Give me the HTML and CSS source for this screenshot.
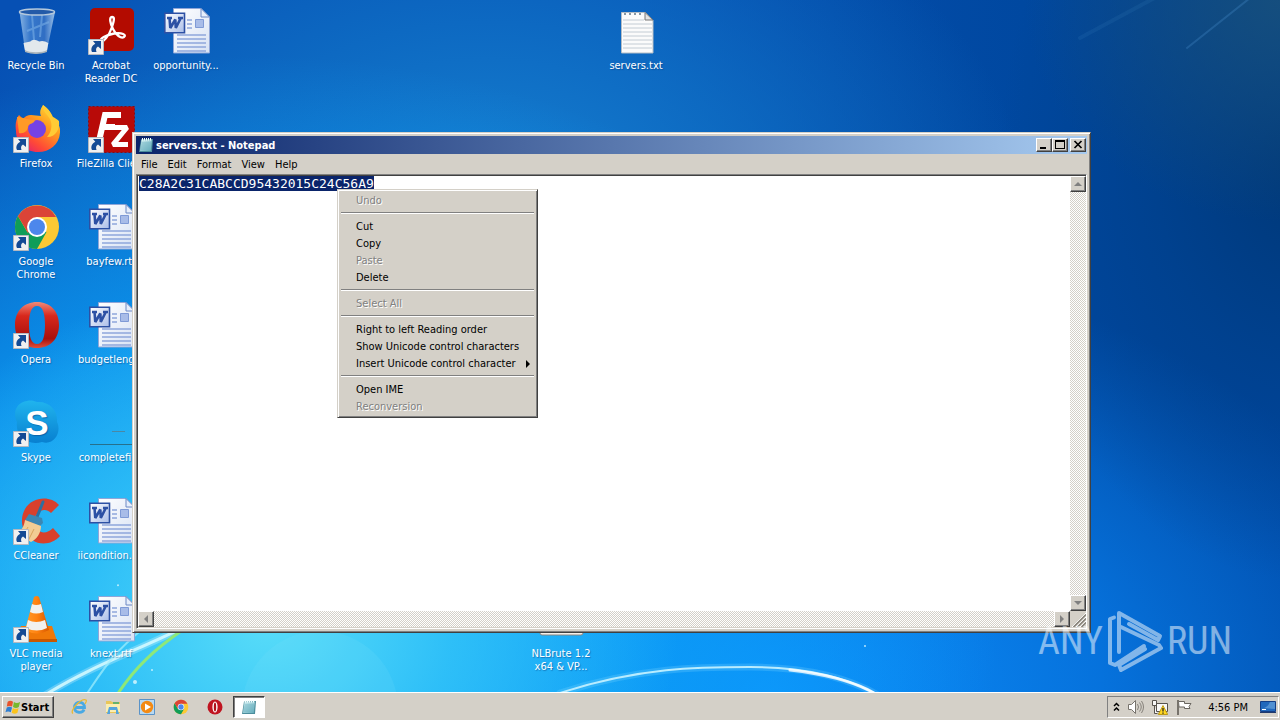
FILE: index.html
```html
<!DOCTYPE html>
<html lang="en">
<head>
<meta charset="utf-8">
<title>Desktop</title>
<link rel="stylesheet" href="styles.css">
</head>
<body>
<svg class="defs" aria-hidden="true">
  <defs>
    <linearGradient id="gGlass" x1="0" x2="1"><stop offset="0" stop-color="#9cc3ea"/><stop offset=".3" stop-color="#3f7fd0"/><stop offset=".7" stop-color="#3873c6"/><stop offset="1" stop-color="#b4d3f0"/></linearGradient>
    <linearGradient id="gPage" x1="0" y1="0" x2="1" y2="1"><stop offset="0" stop-color="#ffffff"/><stop offset="1" stop-color="#d8e2f4"/></linearGradient>
    <linearGradient id="gW" x1="0" y1="0" x2="1" y2="1"><stop offset="0" stop-color="#ffffff"/><stop offset="1" stop-color="#a9bde8"/></linearGradient>
    <linearGradient id="gFox" x1=".9" y1="0" x2=".2" y2="1"><stop offset="0" stop-color="#ffe83c"/><stop offset=".4" stop-color="#ff9a1f"/><stop offset=".75" stop-color="#ff4a36"/><stop offset="1" stop-color="#e3206e"/></linearGradient>
    <linearGradient id="gOpera" x1="0" y1="0" x2="0" y2="1"><stop offset="0" stop-color="#f08a78"/><stop offset=".3" stop-color="#d8281c"/><stop offset=".8" stop-color="#a8100c"/><stop offset="1" stop-color="#e0503c"/></linearGradient>
    <linearGradient id="gSkype" x1="0" y1="0" x2="0" y2="1"><stop offset="0" stop-color="#20b4ee"/><stop offset="1" stop-color="#0880d0"/></linearGradient>
    <linearGradient id="gNote" x1="0" y1="0" x2="1" y2="1"><stop offset="0" stop-color="#d4f0f2"/><stop offset="1" stop-color="#5fa9b8"/></linearGradient>
    <linearGradient id="gCone" x1="0" x2="1"><stop offset="0" stop-color="#ff9a28"/><stop offset=".5" stop-color="#ff8210"/><stop offset="1" stop-color="#d85800"/></linearGradient>
    <symbol id="shortcut" viewBox="0 0 16 16"><path fill="#f0f0f0" stroke="#b4b8c0" d="M.5.5h15v15H.5z"/><path fill="#144a94" d="M5 2h8v8l-3-2.600c-2 1.300-2.400 3-1.500 5.600H4C2.400 9.600 4 6.500 7.300 4.700z"/></symbol>
    <symbol id="word" viewBox="0 0 48 48">
      <path fill="url(#gPage)" stroke="#8fa6d8" d="M11.500 1.500h27.500l8.500 8.500v36h-36z"/>
      <path fill="#e6eefb" stroke="#6c88c4" d="M39 1.500v8.500h8.500z"/>
      <path fill="none" stroke="#8ea6dc" stroke-width="1.300" d="M25 13h5M25 17h5M25 21h5M15 28h29M15 32h29M15 36h29M15 40h29M15 44h29"/>
      <path fill="#a8bce8" stroke="#7f9ad6" d="M33.500 12.500h8v8h-8z"/>
      <path fill="url(#gW)" stroke="#2c50a4" stroke-width="1.600" d="M2.800 6.300h19.700v19.400H2.800z"/>
      <path fill="none" stroke="#2c50a4" stroke-width="2.600" stroke-linejoin="bevel" d="M5 11h5M7.500 11l.8 10 5-8.500.5 8.500 5-10M16 11h5"/>
    </symbol>
    <symbol id="chrome" viewBox="0 0 48 48">
      <circle cx="24" cy="24" r="22" fill="#fcc934"/>
      <path fill="#0f9d58" d="M4.950 13A22 22 0 0 0 24 46l9.500-17L24 24 14.500 29.500z"/>
      <path fill="#db4437" d="M4.950 13 15 30l9-16h19.050A22 22 0 0 0 4.950 13z"/>
      <circle cx="24" cy="24" r="10" fill="#fff"/><circle cx="24" cy="24" r="8" fill="#4c87ec"/>
    </symbol>
    <symbol id="notepad" viewBox="0 0 16 16">
      <path fill="#4b8d9c" d="M3 2.500 15 2l-1 13H1z"/><path fill="url(#gNote)" d="M3.500 2.500H14l-1.200 11.500H2z"/>
      <path stroke="#6fb4c4" stroke-width=".8" d="M3.500 6h9.500M3.200 8h9.500M3 10h9.500M2.800 12h9.500"/>
      <path stroke="#f4ffff" stroke-width="1" d="M4.500 1v2.500M6.500 1v2.500M8.500 1v2.500M10.500 1v2.500M12.500 1v2.500"/>
    </symbol>
  </defs>
</svg>

<main class="desktop">
  <svg class="wallpaper" viewBox="0 0 1280 693" preserveAspectRatio="none" aria-hidden="true">
    <g fill="none" stroke-linecap="round">
      <path stroke="#fff" stroke-width="7" opacity=".25" d="M45 696C90 668 135 652 180 630"/>
      <path stroke="#d8fbff" stroke-width="3" opacity=".85" d="M45 696C90 668 135 652 180 630"/>
      <path stroke="#a4f0fc" stroke-width="2" opacity=".7" d="M86 696C105 668 112 655 145 628"/>
      <path stroke="#8ee878" stroke-width="3" d="M117 696C135 668 155 650 184 630"/>
      <path stroke="#7fd8ff" stroke-width="7" opacity=".25" d="M560 694C640 668 700 668 750 668C800 668 845 677 878 696"/>
      <path stroke="#b8ecff" stroke-width="2" d="M560 694C640 668 700 668 750 668C800 668 845 677 878 696"/>
      <path stroke="#fff" stroke-width="3" opacity=".8" d="M790 671C825 675 853 682 874 694"/>
      <path stroke="#4a90cc" stroke-width="2" opacity=".3" d="M1187 48 1250 -2"/>
      <path stroke="#4a90cc" stroke-width="4" opacity=".12" d="M1080 38 1160 -5"/>
    </g>
    <circle cx="320" cy="710" r="78" fill="#8fe4ff" opacity=".12"/>
    <g fill="#dffaff" opacity=".8"><circle cx="118" cy="586" r="1"/><circle cx="135" cy="683" r="2"/><circle cx="152" cy="671" r="1"/><circle cx="865" cy="647" r="1"/></g>
  </svg>

  <div class="icons">
    <button class="icon"><svg viewBox="0 0 48 48"><path fill="url(#gGlass)" opacity=".85" d="M7.500 5 13 43c1 4 21 4 22 0L43 5z"/><path fill="#e2e8ec" d="m11.500 36 1.500 8c2 3 20 3 22 0l1.300-8q-5-3-9-1.500-6-3.500-9 0z"/><path fill="#aab4ba" d="M13 43c4 3 18 3 22 0v2q-11 4-22 0z"/><path fill="none" stroke="#78aee4" stroke-width="2" opacity=".6" d="m20 8 2 25M30 8l-2 22M15 24l22-9"/><ellipse cx="25" cy="5" rx="17.500" ry="3" fill="#235aa8" stroke="#b4c8dc" stroke-width="1.500"/></svg><span>Recycle Bin</span></button>
    <button class="icon"><svg viewBox="0 0 48 48"><rect x="3" y="1" width="44" height="43" rx="5" fill="#b30b00"/><path fill="none" stroke="#fff" stroke-width="2.300" d="M25 10c-3 0-2 6 1 12s8 10 11 8-2-5-10-3.500S12 32 14 34s8-5 11-14 2-10 0-10z"/><use href="#shortcut" x="1" y="32" width="16" height="16"/></svg><span>Acrobat Reader DC</span></button>
    <button class="icon"><svg viewBox="0 0 48 48"><use href="#word"/></svg><span>opportunity...</span></button>
    <button class="icon far-top"><svg viewBox="0 0 48 48"><path fill="#fbfbfb" stroke="#b4bcc4" d="M9.500 5.500h24l7.500 7.500v33H9.500z"/><path stroke="#c3ccd4" d="M11 13h21M11 17h29M11 21h29M11 25h29M11 29h29M11 33h29M11 37h29M11 41h29"/><path fill="#e4e4e4" stroke="#777" d="M33 5.500V13h8z"/><path stroke="#8898a4" stroke-width="2" stroke-dasharray="2 3" d="M12 7h20"/></svg><span>servers.txt</span></button>

    <button class="icon c1 r2"><svg viewBox="0 0 48 48"><path fill="url(#gFox)" d="M4 26C3 19 4 14 7 10l4 4q3-4 8-4l10 1C27 7 29 3 31 0c6 4 8 8 9 12 3 1 7 6 8 12 1 14-9 23-22 23S4 38 4 26z"/><circle cx="25" cy="24" r="9" fill="#7542e5"/><path fill="#ff9a26" d="M5 12c6 0 10 3 18 3-1 4-5 3-7 6 0 5-4 8-9 7z"/><path fill="#ffcb35" d="M31 0c-1 6 4 9 7 14 3 6 1 14-3 18 9 0 13-8 12-16-2-2-4-3-6-4C39 7 35 3 31 0z"/><use href="#shortcut" x="1" y="32" width="16" height="16"/></svg><span>Firefox</span></button>
    <button class="icon c2 r2"><svg viewBox="0 0 48 48"><path fill="#b80a08" stroke="#8c0b12" stroke-dasharray="2 2" d="M1.500 1.500h46v46h-46z"/><path fill="none" stroke="#fff" stroke-width="6" d="M34 10H18l-6 26M15 22h13"/><path fill="none" stroke="#fff" stroke-width="5" stroke-linejoin="bevel" d="M26 22.500h14L26 39.500h15"/><use href="#shortcut" x="1" y="32" width="16" height="16"/></svg><span>FileZilla Clie...</span></button>

    <button class="icon c1 r3"><svg viewBox="0 0 48 48"><use href="#chrome" x="1"/><use href="#shortcut" x="1" y="32" width="16" height="16"/></svg><span>Google Chrome</span></button>
    <button class="icon c2 r3"><svg viewBox="0 0 48 48"><use href="#word"/></svg><span>bayfew.rtf</span></button>

    <button class="icon c1 r4"><svg viewBox="0 0 48 48"><path fill="url(#gOpera)" fill-rule="evenodd" d="M25 1c13 0 22 9 22 23S38 47 25 47 3 38 3 24 12 1 25 1zm0 4c-6 0-8 8-8 19s2 19 8 19 8-8 8-19-2-19-8-19z"/><use href="#shortcut" x="1" y="32" width="16" height="16"/></svg><span>Opera</span></button>
    <button class="icon c2 r4"><svg viewBox="0 0 48 48"><use href="#word"/></svg><span>budgetleng...</span></button>

    <button class="icon c1 r5"><svg viewBox="0 0 48 48"><path fill="url(#gSkype)" d="M15 2c4-1 7 0 10 1 12-1 21 8 20 20 5 10-3 24-15 20C15 47 3 37 5 23 0 13 5 3 15 2z"/><text x="25" y="36" text-anchor="middle" class="glyph-s">S</text><use href="#shortcut" x="1" y="32" width="16" height="16"/></svg><span>Skype</span></button>
    <button class="icon c2 r5"><svg viewBox="0 0 48 48"><path stroke="#26708c" d="M3 45.500h44"/><path stroke="#4a88a4" d="M25 32.500h13"/></svg><span>completefil...</span></button>

    <button class="icon c1 r6"><svg viewBox="0 0 48 48"><path fill="#d8402c" d="M47 8c-9-10-27-8-34 4-6 11-3 24 7 31 9 6 21 4 28-4l-7-8c-5 5-11 6-15 2-5-5-5-12-1-16 4-5 10-5 14-1z"/><path stroke="#2d6f9f" stroke-width="3" stroke-linecap="round" d="M31 5 25 20"/><path fill="#3a87b4" d="m17 17 13 4 1 5-3 3-15-6z"/><path fill="#f2cd94" d="m13 23 16 6c0 7-4 13-10 16L4 36c5-2 8-6 9-13z"/><path fill="none" stroke="#d9a45c" d="m16 30-6 10M22 32l-6 12"/><use href="#shortcut" x="1" y="32" width="16" height="16"/></svg><span>CCleaner</span></button>
    <button class="icon c2 r6"><svg viewBox="0 0 48 48"><use href="#word"/></svg><span>iicondition.r...</span></button>

    <button class="icon c1 r7"><svg viewBox="0 0 48 48"><path fill="#f07808" d="m9 31-6 15h42l-5-15z"/><path fill="#c85800" d="M3 44h42v3H3z"/><path fill="url(#gCone)" d="M22 2q3-2 5 0l10 33q-12 7-24 0z"/><path fill="#f1f1ee" d="m20 9-2 8q6 3 13 0l-2-8q-5 2-9 0zm-4 16-2 8q11 5 21 0l-2-8q-9 4-17 0z"/><use href="#shortcut" x="1" y="32" width="16" height="16"/></svg><span>VLC media player</span></button>
    <button class="icon c2 r7"><svg viewBox="0 0 48 48"><use href="#word"/></svg><span>knext.rtf</span></button>
    <button class="icon far-bottom"><svg viewBox="0 0 48 48"><rect x="3" y="4" width="43" height="36" rx="2" fill="#f4f0ea" stroke="#8a8580"/></svg><span>NLBrute 1.2 x64 &amp; VP...</span></button>
  </div>

  <section class="window">
    <header class="titlebar">
      <svg class="small-icon" viewBox="0 0 16 16"><use href="#notepad"/></svg>
      <h1>servers.txt - Notepad</h1>
      <div class="controls">
        <button class="bevel" aria-label="Minimize"><svg viewBox="0 0 12 10"><path d="M2 7h6v2H2z"/></svg></button>
        <button class="bevel" aria-label="Maximize"><svg viewBox="0 0 12 10"><path fill-rule="evenodd" d="M1 0h10v9H1zm1 2v6h8V2z"/></svg></button>
        <button class="bevel close" aria-label="Close"><svg viewBox="0 0 12 10"><path fill="none" stroke="#000" stroke-width="1.700" d="m2.500 1 7 7m0-7-7 7"/></svg></button>
      </div>
    </header>
    <nav class="menubar">
      <button>File</button><button>Edit</button><button>Format</button><button>View</button><button>Help</button>
    </nav>
    <div class="editor">
      <textarea id="text" aria-label="Document text" spellcheck="false">C28A2C31CABCCD95432015C24C56A9</textarea>
      <div class="scroll vertical">
        <button class="bevel" aria-label="Scroll up"><svg viewBox="0 0 12 12"><path d="M6 4 2 8h8z"/></svg></button>
        <button class="bevel" aria-label="Scroll down"><svg viewBox="0 0 12 12"><path d="M6 8 2 4h8z"/></svg></button>
      </div>
      <div class="scroll">
        <button class="bevel" aria-label="Scroll left"><svg viewBox="0 0 12 12"><path d="M4 6l4-4v8z"/></svg></button>
        <button class="bevel" aria-label="Scroll right"><svg viewBox="0 0 12 12"><path d="M8 6 4 2v8z"/></svg></button>
      </div>
      <svg class="grip" viewBox="0 0 16 16"><path stroke="#fff" d="M2 16 16 2M6 16 16 6M10 16l6-6"/><path stroke="#848078" stroke-width="1.500" d="M3.500 16 16 3.500M7.500 16 16 7.500M11.500 16l4.500-4.500"/></svg>
    </div>
  </section>

  <div class="context" role="menu">
    <button role="menuitem" disabled>Undo</button>
    <hr>
    <button role="menuitem">Cut</button>
    <button role="menuitem">Copy</button>
    <button role="menuitem" disabled>Paste</button>
    <button role="menuitem">Delete</button>
    <hr>
    <button role="menuitem" disabled>Select All</button>
    <hr>
    <button role="menuitem">Right to left Reading order</button>
    <button role="menuitem">Show Unicode control characters</button>
    <button role="menuitem">Insert Unicode control character<svg viewBox="0 0 4 8"><path d="m0 0 4 4-4 4z"/></svg></button>
    <hr>
    <button role="menuitem">Open IME</button>
    <button role="menuitem" disabled>Reconversion</button>
  </div>

  <div class="watermark"><span>ANY</span><svg viewBox="0 0 56 64"><g fill="none" stroke="#fff" stroke-width="4" stroke-linejoin="round" stroke-linecap="round"><path d="M7 8.500 3 10v44l5 2 29-19"/><path d="M12 43V4l41 23-2 4-29-16"/><path d="m14 18 38 18 2 3-40 22-2-5 26-16"/></g></svg><span>RUN</span></div>
</main>

<footer class="taskbar">
  <button class="bevel start"><svg viewBox="0 0 18 16"><path fill="#e8532c" d="M3 2q3-2 6 0L8 7.500Q5 6 2 7.500z"/><path fill="#77b82c" d="M10 2.500q3 2 7 0L15.500 8q-3 2-6.500 0z"/><path fill="#2f7fd2" d="M2 8.500q3-1.500 6 0L6.500 14q-3-2-6 0z"/><path fill="#fbc31c" d="M8.800 9q3 2 6.500 0L14 14.500q-3 2-6.500 0z"/></svg>Start</button>
  <div class="launch">
    <button aria-label="Internet Explorer"><svg viewBox="0 0 16 16"><path fill="none" stroke="#49a9e4" stroke-width="2.800" d="M4 8.500h9.500c0-7-10-7-10 0 0 6 8 6 9.500 2"/><path fill="none" stroke="#e8b934" stroke-width="1.300" d="M2 14.500C-2 12 10-1 15 1q1 1-1 4"/></svg></button>
    <button aria-label="Explorer"><svg viewBox="0 0 16 16"><path fill="#e9c658" d="M1 2h5l1 1h8v11H1z"/><path fill="#fbeeb0" d="M1 5h14v8H1z"/><path fill="#55a5dc" d="M4 8h8l2 7h-3v-4H5v4H2z"/><path fill="#65b26c" d="M8 3h6v2H8z"/></svg></button>
    <button aria-label="Media Player"><svg viewBox="0 0 16 16"><path fill="#b8d9f2" stroke="#5a93c8" d="M.5.500h15v15H.5z"/><circle cx="8" cy="8" r="6.200" fill="#f38a14"/><path fill="#fff" d="m6 4.500 6 3.500-6 3.500z"/></svg></button>
    <button aria-label="Chrome"><svg viewBox="0 0 48 48"><use href="#chrome"/></svg></button>
    <button aria-label="Opera"><svg viewBox="0 0 16 16"><circle cx="8" cy="8" r="7.500" fill="#c01420"/><ellipse cx="8" cy="8" rx="2.600" ry="5.500" fill="#fff"/><ellipse cx="8" cy="8" rx="1.200" ry="4.500" fill="#b01018"/></svg></button>
  </div>
  <button class="task" aria-label="servers.txt - Notepad"><svg viewBox="0 0 16 16"><use href="#notepad"/></svg></button>
  <div class="tray">
    <button aria-label="Show hidden icons"><svg class="chev" viewBox="0 0 7 10"><path fill="none" stroke="#000" stroke-width="1.500" d="M1 4l2.500-2.500L6 4M1 8.500 3.500 6 6 8.500"/></svg></button>
    <button aria-label="Volume"><svg viewBox="0 0 16 16"><path fill="#fff" stroke="#77736c" d="M.5 5.500h3l4-4v13l-4-4h-3z"/><path fill="none" stroke="#85817a" d="M9.500 5q2 3 0 6M11.500 3.500q3.500 4.500 0 9M13.500 2q4 6 0 12"/></svg></button>
    <button aria-label="Network"><svg viewBox="0 0 16 16"><path fill="#f8f8f8" stroke="#57534e" d="M4.500 4.500h11v8h-11zM.5 1.500h4v5h-4zM2.500 6.500v8h3"/><path fill="#ffd722" stroke="#b08b00" stroke-width=".8" d="m11 6.500 4.700 9H6.300z"/><path stroke="#222" stroke-width="1.300" d="M11 9v3.500m0 1v1.200"/></svg></button>
    <button aria-label="Action Center"><svg viewBox="0 0 16 16"><path fill="#fff" stroke="#6a6660" d="M2.500 2.500h6v2h6.500l-2 3 1 2H8.500v-1.500h-5.500z"/><path stroke="#77736c" stroke-width="2" d="M2 1v15"/></svg></button>
    <time>4:56 PM</time>
    <button aria-label="Show desktop"><svg viewBox="0 0 16 16"><path fill="#2168bc" stroke="#143e86" d="M.5 2.500h15v10H.5z"/><path fill="#82b8e8" d="M1 9q6 1 9-6h5v7z" opacity=".5"/><path fill="#fff" d="M2 10h4v1H2z"/><path fill="#20396c" d="M0 13h16v1H0z"/></svg></button>
  </div>
</footer>
<script src="script.js"></script>
</body>
</html>
```
FILE: styles.css
```css
* { box-sizing: border-box; }

body {
  margin: 0;
  height: 100vh;
  display: flex;
  flex-direction: column;
  overflow: hidden;
  font: 11px/13px Tahoma, "DejaVu Sans Condensed", "DejaVu Sans", sans-serif;
  color: #000;
}

button {
  margin: 0;
  padding: 0;
  border: 0;
  background: none;
  font: inherit;
  color: inherit;
}

svg { display: block; }
.defs { position: absolute; width: 0; height: 0; }

/* Desktop */
.desktop {
  position: relative;
  flex: 1;
  min-height: 0;
  overflow: hidden;
  background:
    radial-gradient(ellipse 20% 32% at 100% 0%, #18507ce0 0%, #124c8000 100%),
    radial-gradient(ellipse 24% 60% at 102% 24%, #003878 0%, #003c8090 50%, #00489800 100%),
    radial-gradient(ellipse 32% 50% at 21% 90%, #58dcf8 0%, #38c8f8c0 45%, #20b4fc00 100%),
    radial-gradient(ellipse 58% 82% at 20% 90%, #14b0fc 0%, #0ca0f8d0 50%, #0c80e800 100%),
    radial-gradient(ellipse 52% 62% at 60% 100%, #0c90fc 0%, #0880f0c0 50%, #0668d800 100%),
    radial-gradient(ellipse 42% 50% at 38% 28%, #1680d0 0%, #1074c8b0 50%, #0a5cb800 100%),
    linear-gradient(90deg, #0650b4 0%, #0650b4 50%, #0048a0 80%, #0048a4 100%);
}

.wallpaper { position: absolute; inset: 0; width: 100%; height: 100%; }

.icons {
  position: relative;
  display: grid;
  grid-template-columns: repeat(auto-fill, 72px);
  grid-auto-rows: 98px;
  column-gap: 3px;
  padding-top: 7px;
}

.icon {
  display: flex;
  flex-direction: column;
  align-items: center;
  gap: 4px;
  color: #fff;
  text-shadow: 1px 1px 1px #0a408080;
}
.icon svg { width: 48px; height: 48px; flex: none; }
.icon span { max-width: 72px; }

.c1 { grid-column: 1; }
.c2 { grid-column: 2; }
.r2 { grid-row: 2; }
.r3 { grid-row: 3; }
.r4 { grid-row: 4; }
.r5 { grid-row: 5; }
.r6 { grid-row: 6; }
.r7 { grid-row: 7; }
.far-top { grid-area: 1 / 9; }
.far-bottom { grid-area: 7 / 8; }

.glyph-s { font: bold 35px "Liberation Sans", sans-serif; fill: #fff; }

/* Raised 3D edge */
.bevel {
  background: #d4d0c8;
  border: 1px solid;
  border-color: #fff #404040 #404040 #fff;
  box-shadow: inset -1px -1px #808080;
}

/* Notepad window */
.window {
  position: absolute;
  inset: 132px 189px 59px 132px;
  display: flex;
  flex-direction: column;
  padding: 3px;
  background: #d4d0c8;
  border: 1px solid;
  border-color: #d4d0c8 #404040 #404040 #d4d0c8;
  box-shadow: inset 1px 1px #fff, inset -1px -1px #808080;
}

.titlebar {
  display: flex;
  align-items: center;
  height: 18px;
  padding: 0 1px 0 2px;
  background: linear-gradient(90deg, #0a246a, #a6caf0);
}
.small-icon { width: 16px; height: 16px; }
.titlebar h1 {
  flex: 1;
  margin: 0 0 0 2px;
  font: bold 11px/13px Tahoma, "DejaVu Sans Condensed", "DejaVu Sans", sans-serif;
  color: #fff;
}
.controls { display: flex; }
.controls button { width: 16px; height: 14px; padding: 1px; }
.controls svg { width: 12px; height: 10px; }
.controls .close { margin-left: 2px; }

.menubar { display: flex; height: 20px; }
.menubar button { padding: 0 5px; }

.editor {
  flex: 1;
  min-height: 0;
  display: grid;
  grid-template: 1fr 16px / 1fr 16px;
  border: 1px solid;
  border-color: #808080 #fff #fff #808080;
  box-shadow: inset 1px 1px #404040;
  padding: 1px 0 1px 1px;
}
.editor textarea {
  width: 100%;
  height: 100%;
  margin: 0;
  padding: 1px;
  border: 0;
  outline: 0;
  resize: none;
  overflow: hidden;
  background: #fff;
  color: #000;
  font: 13px/13px "DejaVu Sans Mono", monospace;
}
.editor textarea::selection { background: #0a246a; color: #fff; }

.scroll {
  display: flex;
  justify-content: space-between;
  background: repeating-conic-gradient(#fff 0 25%, #d4d0c8 0 50%) 0 0 / 2px 2px;
}
.vertical { flex-direction: column; }
.scroll button { width: 16px; height: 16px; padding: 1px; }
.scroll svg { width: 12px; height: 12px; fill: #808080; }
.grip { width: 16px; height: 16px; }

/* Context menu */
.context {
  position: absolute;
  left: 337px;
  top: 189px;
  width: 201px;
  display: flex;
  flex-direction: column;
  padding: 2px;
  background: #d4d0c8;
  border: 1px solid;
  border-color: #d4d0c8 #404040 #404040 #d4d0c8;
  box-shadow: inset 1px 1px #fff, inset -1px -1px #808080;
}
.context button {
  display: flex;
  align-items: center;
  justify-content: space-between;
  height: 17px;
  padding: 0 5px 0 16px;
  text-align: left;
  white-space: nowrap;
}
.context button:disabled { color: #808080; text-shadow: 1px 1px #fff; }
.context hr {
  width: calc(100% - 2px);
  margin: 3px 1px 4px;
  border: 0;
  border-top: 1px solid #808080;
  border-bottom: 1px solid #fff;
}
.context svg { width: 4px; height: 8px; }

/* Corner watermark */
.watermark {
  position: absolute;
  right: 48px;
  bottom: 19px;
  display: flex;
  align-items: center;
  gap: 4px;
  opacity: .5;
  color: #fff;
  font: 38px/64px "Liberation Sans Narrow", "Roboto Condensed", Roboto, sans-serif;
}
.watermark svg { width: 56px; height: 64px; }

/* Taskbar */
.taskbar {
  display: flex;
  align-items: center;
  height: 28px;
  padding: 2px 1px 1px 2px;
  background: #d4d0c8;
  border-top: 1px solid #fff;
}
.start {
  display: flex;
  align-items: center;
  width: 52px;
  height: 22px;
  padding: 0 2px;
  font-weight: bold;
}
.start svg { width: 16px; height: 16px; }

.launch { display: flex; gap: 18px; padding: 0 10px 0 17px; }
.launch svg, .task svg { width: 16px; height: 16px; }

.task {
  display: flex;
  align-items: center;
  justify-content: center;
  width: 32px;
  height: 22px;
  background: #fff;
  border: 1px solid;
  border-color: #404040 #fff #fff #404040;
  box-shadow: inset 1px 1px #808080;
}

.tray {
  display: flex;
  align-items: center;
  gap: 8px;
  height: 22px;
  margin-left: auto;
  padding: 0 2px 0 5px;
  border: 1px solid;
  border-color: #808080 #fff #fff #808080;
}
.tray svg { width: 16px; height: 16px; }
.tray .chev { width: 7px; height: 10px; }
.tray time { margin: 0 4px 0 8px; }
```
FILE: script.js
```js
const text = document.getElementById("text");
text.focus();
text.select();
```
